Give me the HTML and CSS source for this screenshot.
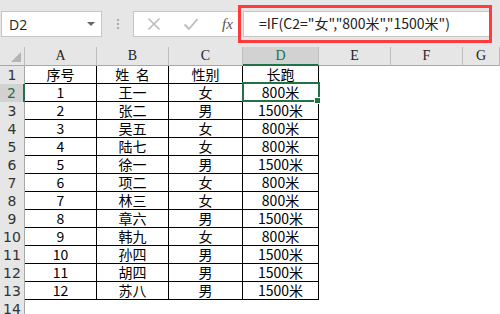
FILE: index.html
```html
<!DOCTYPE html>
<html>
<head>
  <meta charset="utf-8">
  <title>IF 函数</title>
  <link rel="stylesheet" href="styles.css">
</head>
<body>
  <div class="toolbar">
    <div class="namebox">
      <span>D2</span>
      <span class="arrow"></span>
    </div>
    <div class="dots"><i></i><i></i><i></i></div>
    <div class="buttons">
      <svg width="14" height="14" viewBox="0 0 14 14"><path d="M1.5 1.5 L12.5 12.5 M12.5 1.5 L1.5 12.5" stroke="#bcbcbc" stroke-width="1.6" fill="none"/></svg>
      <svg width="16" height="14" viewBox="0 0 16 14"><path d="M1.5 7.5 L6 12 L14.5 2" stroke="#bcbcbc" stroke-width="1.8" fill="none"/></svg>
      <span class="fx">fx</span>
    </div>
    <div class="formula">=IF(C2="女","800米","1500米")</div>
    <div class="mark"></div>
  </div>

  <div class="sheet">
    <div class="corner"></div>
    <div class="colhead">A</div>
    <div class="colhead">B</div>
    <div class="colhead">C</div>
    <div class="colhead active">D</div>
    <div class="colhead">E</div>
    <div class="colhead">F</div>
    <div class="colhead">G</div>

    <div class="rowhead">1</div>
    <div class="cell">序号</div><div class="cell">姓&nbsp;&nbsp;名</div><div class="cell">性别</div><div class="cell">长跑</div>
    <div class="blank"></div><div class="blank"></div><div class="blank"></div>

    <div class="rowhead active">2</div>
    <div class="cell">1</div><div class="cell">王一</div><div class="cell">女</div><div class="cell selected">800米<span class="handle"></span></div>
    <div class="blank"></div><div class="blank"></div><div class="blank"></div>

    <div class="rowhead">3</div>
    <div class="cell">2</div><div class="cell">张二</div><div class="cell">男</div><div class="cell">1500米</div>
    <div class="blank"></div><div class="blank"></div><div class="blank"></div>

    <div class="rowhead">4</div>
    <div class="cell">3</div><div class="cell">吴五</div><div class="cell">女</div><div class="cell">800米</div>
    <div class="blank"></div><div class="blank"></div><div class="blank"></div>

    <div class="rowhead">5</div>
    <div class="cell">4</div><div class="cell">陆七</div><div class="cell">女</div><div class="cell">800米</div>
    <div class="blank"></div><div class="blank"></div><div class="blank"></div>

    <div class="rowhead">6</div>
    <div class="cell">5</div><div class="cell">徐一</div><div class="cell">男</div><div class="cell">1500米</div>
    <div class="blank"></div><div class="blank"></div><div class="blank"></div>

    <div class="rowhead">7</div>
    <div class="cell">6</div><div class="cell">项二</div><div class="cell">女</div><div class="cell">800米</div>
    <div class="blank"></div><div class="blank"></div><div class="blank"></div>

    <div class="rowhead">8</div>
    <div class="cell">7</div><div class="cell">林三</div><div class="cell">女</div><div class="cell">800米</div>
    <div class="blank"></div><div class="blank"></div><div class="blank"></div>

    <div class="rowhead">9</div>
    <div class="cell">8</div><div class="cell">章六</div><div class="cell">男</div><div class="cell">1500米</div>
    <div class="blank"></div><div class="blank"></div><div class="blank"></div>

    <div class="rowhead">10</div>
    <div class="cell">9</div><div class="cell">韩九</div><div class="cell">女</div><div class="cell">800米</div>
    <div class="blank"></div><div class="blank"></div><div class="blank"></div>

    <div class="rowhead">11</div>
    <div class="cell">10</div><div class="cell">孙四</div><div class="cell">男</div><div class="cell">1500米</div>
    <div class="blank"></div><div class="blank"></div><div class="blank"></div>

    <div class="rowhead">12</div>
    <div class="cell">11</div><div class="cell">胡四</div><div class="cell">男</div><div class="cell">1500米</div>
    <div class="blank"></div><div class="blank"></div><div class="blank"></div>

    <div class="rowhead">13</div>
    <div class="cell">12</div><div class="cell">苏八</div><div class="cell">男</div><div class="cell">1500米</div>
    <div class="blank"></div><div class="blank"></div><div class="blank"></div>

    <div class="rowhead">14</div>
  </div>
</body>
</html>
```

FILE: styles.css
```css
body {
  margin: 0;
  background: #ffffff;
  font-family: "Noto Sans CJK SC", sans-serif;
  overflow: hidden;
}

/* formula bar */
.toolbar {
  position: relative;
  height: 47px;
  background: #e6e6e6;
  display: flex;
  align-items: flex-start;
  padding: 11px 10px 0 1px;
  box-sizing: border-box;
}
.namebox {
  width: 101px;
  height: 26px;
  box-sizing: border-box;
  background: #fff;
  border: 1px solid #c6c6c6;
  display: flex;
  align-items: center;
  justify-content: space-between;
  padding: 0 6px 0 7px;
  font-family: "Open Sans", sans-serif;
  font-size: 14px;
  color: #222;
}
.arrow {
  width: 0;
  height: 0;
  border-left: 4px solid transparent;
  border-right: 4px solid transparent;
  border-top: 4px solid #666;
}
.dots {
  width: 31px;
  height: 26px;
  display: flex;
  flex-direction: column;
  align-items: center;
  justify-content: center;
  gap: 2px;
}
.dots i {
  width: 2px;
  height: 2px;
  background: #ababab;
}
.buttons {
  width: 106px;
  height: 26px;
  box-sizing: border-box;
  background: #fff;
  border: 1px solid #c6c6c6;
  display: flex;
  align-items: center;
  gap: 22px;
  padding-left: 13px;
}
.fx {
  font-family: "Liberation Serif", serif;
  font-style: italic;
  font-size: 15px;
  color: #555;
  margin-left: 1px;
}
.formula {
  flex: 1;
  height: 26px;
  margin-left: 4px;
  box-sizing: border-box;
  background: #fff;
  border: 1px solid #c6c6c6;
  padding-left: 15px;
  font-size: 14px;
  line-height: 23px;
  color: #222;
  white-space: nowrap;
}
.mark {
  position: absolute;
  left: 238px;
  top: 5px;
  width: 254px;
  height: 38px;
  box-sizing: border-box;
  border: 3px solid #ff3b3b;
}

/* grid */
.sheet {
  display: grid;
  grid-template-columns: 25px 72px 72px 74px 76px 72px 72px 1fr;
  grid-template-rows: 19px;
  grid-auto-rows: 18px;
}
.corner,
.colhead {
  background: #e6e6e6;
  border-bottom: 1px solid #a8a8a8;
  box-sizing: border-box;
}
.corner {
  position: relative;
  border-right: 1px solid #bdbdbd;
}
.corner::after {
  content: "";
  position: absolute;
  right: 3px;
  bottom: 3px;
  border-left: 10px solid transparent;
  border-bottom: 10px solid #b4b4b4;
}
.colhead {
  border-right: 1px solid #bdbdbd;
  text-align: center;
  font-family: "Liberation Serif", serif;
  font-size: 14px;
  line-height: 18px;
  color: #222;
}
.colhead.active {
  background: #d2d2d2;
  color: #217346;
  border-bottom: 2px solid #217346;
}
.rowhead {
  grid-column: 1;
  background: #e6e6e6;
  border-right: 1px solid #a8a8a8;
  box-sizing: border-box;
  text-align: center;
  font-family: "DejaVu Sans", sans-serif;
  font-size: 14px;
  line-height: 18px;
  color: #333;
}
.rowhead.active {
  background: #d2d2d2;
  color: #217346;
  border-right: 2px solid #217346;
}
.cell {
  border-right: 1px solid #000;
  border-bottom: 1px solid #000;
  box-sizing: border-box;
  text-align: center;
  font-size: 14px;
  line-height: 17px;
  color: #000;
}
.cell.selected {
  position: relative;
}
.cell.selected::after {
  content: "";
  position: absolute;
  left: -1px;
  top: -2px;
  right: -2px;
  bottom: -1px;
  border: 2px solid #217346;
}
.handle {
  position: absolute;
  right: -3px;
  bottom: -3px;
  width: 5px;
  height: 5px;
  background: #217346;
  border: 1px solid #fff;
  z-index: 1;
}
.blank {
  background: #fff;
}
```
